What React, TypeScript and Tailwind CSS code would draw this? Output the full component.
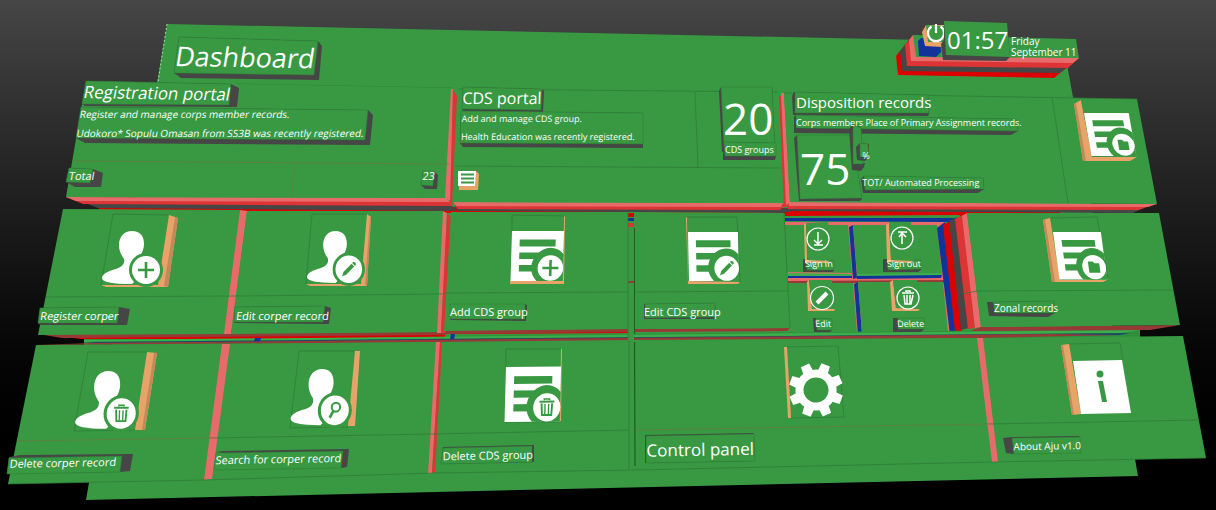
import type { ReactNode } from "react";

const GREEN = "#389942";
const LINE = "#2c7a35";
const ROSE = "#e86b6b";
const RED = "#dd3535";
const PURE = "#dc0000";
const DARK = "#464646";
const BLUE = "#12349a";
const ORANGE = "#e8a468";
const MAROON = "#963a38";

type Shape = [fill: string, points: string];

function Polys({ items }: { items: Shape[] }) {
  return (
    <>
      {items.map(([fill, points], i) => (
        <polygon key={i} fill={fill} points={points} />
      ))}
    </>
  );
}

function Lines({ paths, color = LINE }: { paths: string[]; color?: string }) {
  return (
    <>
      {paths.map((d, i) => (
        <path key={i} d={d} fill="none" stroke={color} strokeWidth="0.7" />
      ))}
    </>
  );
}

/* A label plate: green face over a darker extruded side. */
function Plates({ items }: { items: [side: string, face: string][] }) {
  return (
    <>
      {items.map(([side, face], i) => (
        <g key={i}>
          <polygon points={side} fill={DARK} />
          <polygon points={face} fill={GREEN} stroke={LINE} strokeWidth="0.5" />
        </g>
      ))}
    </>
  );
}

type Glyph = "plus" | "pencil" | "trash" | "search" | "folder";

const glyphs: Record<Glyph, ReactNode> = {
  plus: <path d="M0-8V8M-8 0H8" stroke={GREEN} strokeWidth="2.6" />,
  pencil: (
    <g transform="rotate(45)" fill={GREEN}>
      <path d="M-2-6H2V6L0 10L-2 6Z" />
      <path d="M-2-7V-8.5Q0-11 2-8.5V-7Z" />
    </g>
  ),
  trash: (
    <g fill="none" stroke={GREEN}>
      <path d="M-7-5.2H7" strokeWidth="1.8" />
      <path d="M-2.5-6.5V-7.6H2.5V-6.5" strokeWidth="1.4" />
      <path d="M-5-3.6L-4.4 7H4.4L5-3.6" strokeWidth="1.8" />
      <path d="M-1.7-3V6.5M1.7-3V6.5" strokeWidth="1.3" />
    </g>
  ),
  search: (
    <g fill="none" stroke={GREEN}>
      <circle cx="1" cy="-3" r="4.2" strokeWidth="2" />
      <path d="M-1.5.8L-5 7" strokeWidth="2.6" />
    </g>
  ),
  folder: <path d="M-6-6H-1L1-4H6V6H-6Z" fill={GREEN} />,
};

function Badge({ x, y, glyph }: { x: number; y: number; glyph: Glyph }) {
  return (
    <g transform={`translate(${x} ${y})`}>
      <circle r="17" fill={GREEN} />
      <circle r="14" fill="#fff" />
      {glyphs[glyph]}
    </g>
  );
}

function Doc({ matrix, glyph }: { matrix: string; glyph: Glyph }) {
  return (
    <g transform={matrix}>
      <path d="M0 0H52V50H0Z" fill="#fff" />
      <path d="M8 8.500H44V15.500H8ZM8 21.500H44V28H8ZM8 34H30V40.500H8Z" fill={GREEN} />
      <path d="M52 23V50H26A17 17 0 0 1 52 23Z" fill={GREEN} />
      <g transform="translate(39.500 37)">
        <path d="M-16.500 0A16.500 16.500 0 0 1 12.500-14L12.500 13H-10Z" fill={GREEN} />
        <circle r="12.800" fill="#fff" />
        {glyphs[glyph]}
      </g>
    </g>
  );
}

function Person({ matrix, glyph }: { matrix: string; glyph: Glyph }) {
  return (
    <g transform={matrix}>
      <path
        fill="#fff"
        d="M30 0C22 0 17 6 17 14C17 21 20 25 22 28C23 33 20 36 14 38C6 40 0 43 0 47C0 51 10 53 30 53L44 40C38 38 35 36 35 31C37 26 42 21 42 13C42 5 38 0 30 0Z"
      />
      <Badge x={44} y={39} glyph={glyph} />
    </g>
  );
}

function Gear() {
  return (
    <g transform="translate(816 390) rotate(21)" fill="#fff">
      {[0, 45, 90, 135, 180, 225, 270, 315].map((a) => (
        <path key={a} d="M-4.500-27H4.500L5.500-15H-5.500Z" transform={`rotate(${a})`} />
      ))}
      <circle r="16.500" fill="none" stroke="#fff" strokeWidth="8" />
    </g>
  );
}

const Scene = () => (
  <svg
    aria-hidden="true"
    viewBox="0 0 1216 510"
    preserveAspectRatio="none"
    className="absolute inset-0 -z-10 h-full w-full"
  >
    <polygon fill={GREEN} points="167,24 1063,43 1073,97 1138,476 86,500" />
    <path d="M167 24L158 82" stroke="#cfe3d1" strokeWidth="0.8" strokeDasharray="2 2" />
    <Lines paths={["M236 84L452 88"]} />

    {/* clock stack */}
    <Polys
      items={[
        [PURE, "896,56 912,36 1079,58 1054,78 898,75"],
        [DARK, "900,51 913,36 1079,58 1060,73 902,71"],
        [RED, "905,45 913,36 1079,58 1068,68 907,66"],
        [ROSE, "909,40 913,35 1079,58 1073,63 911,61"],
        [GREEN, "913,35 1076,39 1079,58 916,57"],
        [BLUE, "918,41 921,38 940,38 941,52 936,57 919,56"],
        [ORANGE, "922,32 926,25 946,25 946,42 942,47 925,46"],
        [GREEN, "926,25 944,26 945,42 928,42"],
      ]}
    />
    <g transform="translate(936 33)" fill="none" stroke="#fff" strokeWidth="2.2">
      <path d="M-4.500-6.500A8 8 0 1 0 4.500-6.500" />
      <path d="M0-9V0" />
    </g>
    <Polys
      items={[
        [DARK, "941,44 944,40 944,21 1007,23 1010,57 1006,61 943,60"],
        [GREEN, "944,21 1007,23 1010,57 946,55"],
      ]}
    />

    {/* gap fillers between the first and second rows */}
    <Polys
      items={[
        [PURE, "98,206 1060,209 1060,215 100,212"],
        [DARK, "80,201 445,202 455,208 455,211 98,208"],
        [RED, "66,197 452,201 452,206 83,204"],
        [ROSE, "66,197 446,198 450,202 76,201"],
        [DARK, "455,206 790,208 790,213 458,211"],
        [RED, "453,203 786,204 780,210 458,209"],
        [ROSE, "453,202 783,203 781,207 456,206"],
        [DARK, "788,205 1146,207 1133,213 790,211"],
        [RED, "785,203 1152,205 1139,210 788,209"],
        [ROSE, "787,202 1157,204 1148,207 788,206"],
      ]}
    />

    {/* first row */}
    <Polys
      items={[
        [GREEN, "86,81 452,88 445,198 66,197"],
        [ROSE, "451,89 453,89 451,201 445,198"],
        [RED, "453,90 457,96 452,204 450,202"],
        [GREEN, "458,89 778,92 784,203 453,202"],
        [RED, "779,96 781,96 789,206 784,207"],
        [ROSE, "781,93 784,93 790,203 786,205"],
        [GREEN, "784,93 1137,99 1157,204 790,202"],
      ]}
    />
    <Lines
      color="#6c7a3c"
      paths={["M73 161L449 164", "M295 163L291 197"]}
    />
    <Lines
      paths={[
        "M455 166L782 168",
        "M695 92L698 168",
        "M458 89L778 92",
        "M784 93L1137 99",
        "M1052 97L1068 203",
      ]}
    />

    <Plates
      items={[
        ["174,73 179,37 318,41 322,46 319,80 181,78", "179,37 318,41 314,75 174,73"],
        ["82,104 86,81 231,84 239,88 237,107 85,106", "86,81 231,84 229,105 82,104"],
        ["76,138 81,107 368,110 373,115 370,145 85,143", "81,107 368,110 365,140 76,138"],
        ["66,182 69,168 93,169 103,173 101,187 75,187", "69,168 93,169 90,183 66,182"],
        ["421,185 423,171 434,171 438,175 437,189 425,189", "423,171 434,171 433,186 421,185"],
        ["462,109 463,87 542,89 544,91 543,112 463,111", "463,87 542,89 541,110 462,109"],
        ["460,143 461,111 643,113 643,148 463,147", "461,111 643,113 643,144 460,143"],
        ["719,91 721,87 772,87 775,149 722,152", "721,87 772,87 775,149 724,149"],
        ["723,150 724,142 776,143 776,156 775,160 723,160", "724,142 776,143 776,156 725,156"],
        ["792,96 794,92 928,95 929,114 928,116 793,115", "795,92 928,95 929,113 795,113"],
        ["794,117 796,115 1016,119 1018,131 1011,135 794,133", "796,115 1016,119 1018,131 796,128"],
        ["794,138 797,135 852,135 862,199 860,201 799,201", "797,135 852,135 862,198 800,199"],
        ["849,129 853,124 861,127 862,163 865,163 864,167 861,171 852,170", "853,124 861,128 863,164 853,164"],
        ["856,147 860,143 869,144 869,157 865,161 857,160", "860,143 868,144 869,157 860,157"],
        ["861,179 864,176 983,178 984,189 978,193 863,193", "864,176 983,178 984,189 865,190"],
      ]}
    />

    <Polys
      items={[
        [ORANGE, "458,171 476,171 479,174 478,190 459,190"],
        ["#fff", "458,171 476,171 475,186 458,186"],
        [ORANGE, "1074,104 1081,100 1092,157 1137,157 1130,161 1083,161"],
        [GREEN, "1081,100 1126,100 1136,157 1092,157"],
      ]}
    />
    <path d="M461 174.500H474M461 178.500H474M461 182.500H474" stroke={GREEN} strokeWidth="2" />
    <Doc matrix="matrix(0.86 0 0.15 0.86 1084 113)" glyph="folder" />

    {/* second row: recessed shortcut grid */}
    <Polys
      items={[
        [PURE, "785,212 968,212 962,216 785,216"],
        [GREEN, "785,216 960,215 956,220 785,218"],
        [BLUE, "785,218 956,218 950,222 785,221"],
        [ROSE, "785,222 945,222 948,282 955,334 785,334"],
        [GREEN, "785,225 848,225 852,273 785,272"],
        ["#3fae4e", "788,273 852,274 852,276 788,276"],
        [BLUE, "788,276 852,276 852,278 788,278"],
        [BLUE, "849,227 853,225 857,278 853,279"],
        [GREEN, "853,225 937,225 942,274 857,274"],
        ["#3fae4e", "857,274 942,273 942,276 857,276"],
        [BLUE, "857,276 942,275 941,278 857,279"],
        [MAROON, "788,281 945,280 945,283 788,283"],
        [GREEN, "785,283 853,283 857,332 785,333"],
        [BLUE, "788,333 857,334 857,337 785,336"],
        [BLUE, "854,284 858,282 862,334 858,335"],
        [GREEN, "858,282 943,282 948,333 862,333"],
        [BLUE, "937,228 945,222 956,333 950,335"],
        [PURE, "943,225 950,221 962,331 955,331"],
        [DARK, "949,221 957,217 969,328 961,330"],
        [RED, "955,219 963,215 975,328 968,329"],
        [ROSE, "962,216 967,213 981,327 975,328"],
      ]}
    />

    {/* strips under the second row */}
    <Polys
      items={[
        ["#2f8f3c", "84,339 1140,329 1140,337 84,345"],
        [PURE, "60,336 445,333 445,339 80,339"],
        ["#3cae4c", "84,340 1141,330 1120,333 84,342"],
        ["#174a6a", "84,342 1130,333 1120,335 95,343"],
        [PURE, "455,331 630,330 630,333 455,334"],
        [BLUE, "451,334 455,334 454,340 450,340"],
        [BLUE, "255,338 261,338 260,342 254,342"],
        [MAROON, "95,343 1050,334 1120,335 980,338 36,345"],
        [MAROON, "38,334 444,332 450,333 445,335 62,338"],
        [MAROON, "444,330 628,329 628,332 448,334"],
        [MAROON, "634,329 790,328 787,331 634,332"],
        [MAROON, "981,327 1180,325 1150,330 970,331"],
      ]}
    />

    <Polys
      items={[
        [GREEN, "63,209 240,210 224,334 38,335"],
        [ROSE, "240,210 247,211 231,334 224,334"],
        [GREEN, "247,211 443,211 437,332 231,334"],
        [ROSE, "443,211 447,213 441,333 437,333"],
        [RED, "447,213 451,217 445,333 441,333"],
        [GREEN, "451,212 628,212 628,329 444,331"],
        [GREEN, "628,212 634,212 634,340 628,340"],
        [PURE, "628,213 634,213 634,217 628,217"],
        [BLUE, "628,218 634,218 634,221 628,221"],
        [RED, "628,223 634,223 634,227 628,227"],
        [MAROON, "628,281 634,281 634,283 628,283"],
        [GREEN, "634,212 784,213 790,328 634,329"],
        [GREEN, "967,213 1159,213 1180,325 981,327"],
      ]}
    />
    <path d="M634.500 228V334" stroke="#1f5a28" strokeWidth="1" />
    <Lines
      paths={[
        "M46 297L235 296",
        "M235 296L443 294",
        "M445 293L628 292",
        "M634 292L789 291",
        "M628 212V338",
        "M784 213L790 328",
        "M962 294L977 291L1173 290",
        "M113 214L169 215M113 214L101 285",
        "M312 214H367M312 214L306 284",
        "M512 215L565 216M512 215V231",
        "M687 217H737L740 282",
        "M1050 218L1097 217L1108 279",
      ]}
    />
    <Plates
      items={[
        ["38,324 40,308 119,307 130,309 127,325 41,325", "40,308 119,307 117,323 38,323"],
        ["234,323 235,307 325,306 331,308 329,324", "235,307 325,306 323,322 234,322"],
        ["450,319 450,304 525,304 527,305 526,321 451,320", "450,304 525,304 525,319 450,319"],
        ["644,318 644,304 715,303 716,318 714,319 644,319", "645,304 715,303 715,317 645,318"],
        ["987,302 993,302 1054,301 1055,313 1048,317 989,316", "993,302 1054,301 1055,313 995,313"],
        ["803,259 806,259 834,260 834,271 832,272 803,272", "806,259 834,260 834,270 807,270"],
        ["883,259 887,259 921,260 921,270 918,272 883,272", "887,259 921,260 921,269 888,270"],
        ["813,318 816,318 832,319 832,330 830,332 814,332", "816,318 832,319 832,330 817,330"],
        ["893,318 898,318 924,318 924,329 921,332 893,332", "898,318 924,318 924,329 898,329"],
      ]}
    />
    <Polys
      items={[
        [ORANGE, "169,215 178,218 168,287 106,287 101,285 158,285"],
        [ORANGE, "367,214 371,217 367,286 310,286 306,284 361,284"],
        [ORANGE, "564,216 565,217 564,284 510,284 510,281 563,281"],
        [ORANGE, "686,218 687,217 688,281 740,282 738,284 688,284"],
        [ORANGE, "1043,220 1050,218 1060,280 1107,280 1103,282 1052,282"],
        [ORANGE, "804,225 806,223 807,260 829,261 828,263 805,263"],
        [GREEN, "806,223 828,222 831,260 808,260"],
        [ORANGE, "886,225 889,223 891,260 913,261 912,263 887,262"],
        [GREEN, "889,222 911,222 914,260 891,260"],
        [ORANGE, "807,282 809,280 812,309 835,309 834,311 808,311"],
        [GREEN, "809,280 832,280 835,309 812,309"],
        [ORANGE, "890,282 893,280 896,308 920,309 918,311 892,311"],
        [GREEN, "893,280 917,280 920,309 896,308"],
      ]}
    />
    {/* shaded right edges of the icon slabs */}
    <Polys
      items={[
        ["#c28a58", "175,217 178,218 168,287 164,286"],
        ["#c28a58", "370,216 371,217 367,286 365,285"],
        ["#c28a58", "1043,220 1045,219 1055,282 1052,282"],
        ["#c28a58", "1074,104 1076,103 1086,161 1083,161"],
      ]}
    />
    <Person matrix="matrix(1 0 0 1 102 231)" glyph="plus" />
    <Person matrix="matrix(0.95 0 0 0.98 307 231)" glyph="pencil" />
    <Doc matrix="matrix(1 0 -0.03 1 512 231)" glyph="plus" />
    <Doc matrix="matrix(0.96 0 0.02 0.98 688 232)" glyph="pencil" />
    <Doc matrix="matrix(0.92 0 0.13 0.95 1053 232)" glyph="folder" />
    <g fill="none" stroke="#fff" strokeWidth="1.2">
      <circle cx="818" cy="239" r="11" />
      <circle cx="902" cy="238" r="11" />
      <circle cx="822" cy="298" r="11.5" />
      <circle cx="908" cy="298" r="11" />
      <path d="M818 232V243M814 240L818 244L822 240M814 245H823" strokeWidth="1.5" />
      <path d="M902 244V234M899 237L902 233L906 237M898 232H907" strokeWidth="1.5" />
      <path d="M817 303L827 293" strokeWidth="4" />
      <path d="M902 293H914M906 292V291H910V292" strokeWidth="1.5" />
      <path d="M904 295L905 304H911L913 295M907 295V304M910 295V304" strokeWidth="1.500" />
    </g>

    {/* third row */}
    <Polys
      items={[
        [GREEN, "36,345 222,344 204,480 8,484"],
        [GREEN, "230,344 436,342 428,474 212,479"],
        [GREEN, "442,342 635,340 636,470 435,473"],
        [GREEN, "635,340 977,338 992,462 636,470"],
        [GREEN, "983,338 1183,336 1206,458 998,462"],
        [ROSE, "222,344 230,344 212,479 204,480"],
        [ROSE, "436,342 440,342 432,473 428,474"],
        [RED, "440,342 442,344 435,472 432,473"],
        [ROSE, "977,338 983,338 998,462 992,462"],
      ]}
    />
    <path d="M634.500 342L635 466" stroke="#1f5a28" strokeWidth="1.2" />
    <Lines color="#6c7a3c" paths={["M17 441L210 438", "M636 430L988 424"]} />
    <Lines
      paths={[
        "M210 438L432 434L629 430M988 424L1199 420",
        "M629 340V470",
        "M8 484L204 480L435 473L636 470L992 462L1206 458",
        "M88 352H147M88 352L74 431L135 430",
        "M299 351H354M299 351L290 428L348 427",
        "M506 349H561M506 349V366M505 422H560",
        "M787 347L838 346L844 417L791 418",
        "M1069 344L1120 343L1123 360",
      ]}
    />
    <Plates
      items={[
        ["9,457 20,455 133,454 130,471 120,472 7,473", "9,458 122,456 120,472 7,474"],
        ["216,452 223,451 349,449 347,467 341,468", "216,453 343,451 341,468 214,470"],
        ["443,447 534,445 534,462 441,464", "443,448 532,446 532,462 441,464"],
        ["645,435 754,433 755,461 645,463", "646,436 754,434 755,461 646,463"],
        ["1003,438 1012,437 1079,436 1080,438 1014,454 1006,453", "1012,438 1080,437 1081,453 1014,454"],
      ]}
    />
    <Polys
      items={[
        [ORANGE, "147,352 157,353 145,430 135,430"],
        ["#c28a58", "154,353 157,353 145,430 142,430"],
        [ORANGE, "355,351 360,351 355,426 348,426"],
        [ORANGE, "561,349 562,349 561,421 560,421"],
        [ORANGE, "784,347 787,347 791,418 788,418"],
        [ORANGE, "1061,345 1069,344 1081,414 1072,415"],
        ["#c28a58", "1061,345 1063,345 1074,415 1072,415"],
        ["#fff", "1073,361 1122,360 1131,413 1081,414"],
        [GREEN, "1098,381 1103,381 1107,402 1102,402"],
      ]}
    />
    <circle cx="1100" cy="374" r="3.5" fill={GREEN} />
    <Person matrix="matrix(1.04 0 -0.04 1.09 77 371)" glyph="trash" />
    <Person matrix="matrix(1 0 -0.03 1.06 292 369)" glyph="search" />
    <Doc matrix="matrix(1.06 -0.01 -0.03 1.1 506 367)" glyph="trash" />
    <Gear />
  </svg>
);

function Label({ children, className = "" }: { children: ReactNode; className?: string }) {
  return (
    <button type="button" className={`text-left leading-4 ${className}`}>
      {children}
    </button>
  );
}

export default function App() {
  return (
    <main className="relative isolate grid min-h-screen grid-rows-[80fr_130fr_134fr_166fr] overflow-hidden bg-linear-to-b from-[#464646] to-black font-['Open_Sans','Noto_Sans',sans-serif] whitespace-nowrap text-white">
      <Scene />

      <header className="grid grid-cols-[178fr_769fr_64fr_205fr]">
        <h1 className="col-start-2 origin-left rotate-1 -skew-x-8 pt-9 text-[27px] leading-10">
          Dashboard
        </h1>
        <time className="pt-6 text-2xl leading-8">01:57</time>
        <p className="flex flex-col pt-9 text-[10px] leading-[11px]">
          <span>Friday</span>
          <span>September 11</span>
        </p>
      </header>

      <div className="grid grid-cols-[86fr_366fr_11fr_260fr_73fr_420fr]">
        <section className="col-start-2 origin-top-left -skew-x-10">
          <h2 className="origin-left rotate-1 pt-0.5 text-[17px] leading-5">Registration portal</h2>
          <p className="pt-1 text-[10px] leading-4">Register and manage corps member records.</p>
          <p className="pt-1 text-[10px] leading-[14px]">
            Udokoro* Sopulu Omasan from SS3B was recently registered.
          </p>
          <p className="flex justify-between pt-7 text-[11px] leading-4">
            <span>Total</span>
            <span>23</span>
          </p>
        </section>

        <section className="col-start-4 origin-top-left -skew-x-2">
          <h2 className="pt-2 text-base leading-5">CDS portal</h2>
          <p className="pt-1 text-[9px] leading-[14px]">Add and manage CDS group.</p>
          <p className="pt-1 text-[9px] leading-[14px]">Health Education was recently registered.</p>
        </section>
        <p className="flex flex-col items-start gap-1 pt-4">
          <span className="text-[44px] leading-11">20</span>
          <span className="pl-0.5 text-[9px] leading-3">CDS groups</span>
        </p>

        <section>
          <h2 className="pt-3 text-[15px] leading-5">Disposition records</h2>
          <p className="pt-1 text-[9px] leading-[14px]">
            Corps members Place of Primary Assignment records.
          </p>
          <div className="flex gap-3 pt-4">
            <span className="pl-1 text-[44px] leading-11">75</span>
            <p className="flex flex-col justify-between pt-1 text-[9px] leading-3">
              <span>%</span>
              <span className="pb-px">TOT/ Automated Processing</span>
            </p>
          </div>
        </section>
      </div>

      <nav
        aria-label="Records"
        className="grid grid-cols-[39fr_196fr_215fr_194fr_160fr_164fr_26fr_222fr] items-end text-[11px]"
      >
        <Label className="col-start-2 -skew-x-8 pb-5">Register corper</Label>
        <Label className="-skew-x-6 pb-5">Edit corper record</Label>
        <Label className="pb-6">Add CDS group</Label>
        <Label className="pb-6">Edit CDS group</Label>
        <div className="grid origin-top-left skew-x-6 grid-cols-2 gap-y-11 pb-3 text-[9px] leading-4">
          <button type="button" className="text-left">Sign in</button>
          <button type="button" className="text-left">Sign out</button>
          <button type="button" className="pl-1 text-left">Edit</button>
          <button type="button" className="pl-1 text-left">Delete</button>
        </div>
        <Label className="col-start-8 pb-7 text-[10px]">Zonal records</Label>
      </nav>

      <nav
        aria-label="Tools"
        className="grid origin-left -rotate-1 grid-cols-[9fr_206fr_227fr_204fr_367fr_203fr] items-start pt-28 text-[11px]"
      >
        <Label className="col-start-2 -skew-x-8">Delete corper record</Label>
        <Label className="-skew-x-6">Search for corper record</Label>
        <Label>Delete CDS group</Label>
        <button type="button" className="-mt-1 text-left text-[17px] leading-5">Control panel</button>
        <Label className="text-[10px]">About Aju v1.0</Label>
      </nav>
    </main>
  );
}
